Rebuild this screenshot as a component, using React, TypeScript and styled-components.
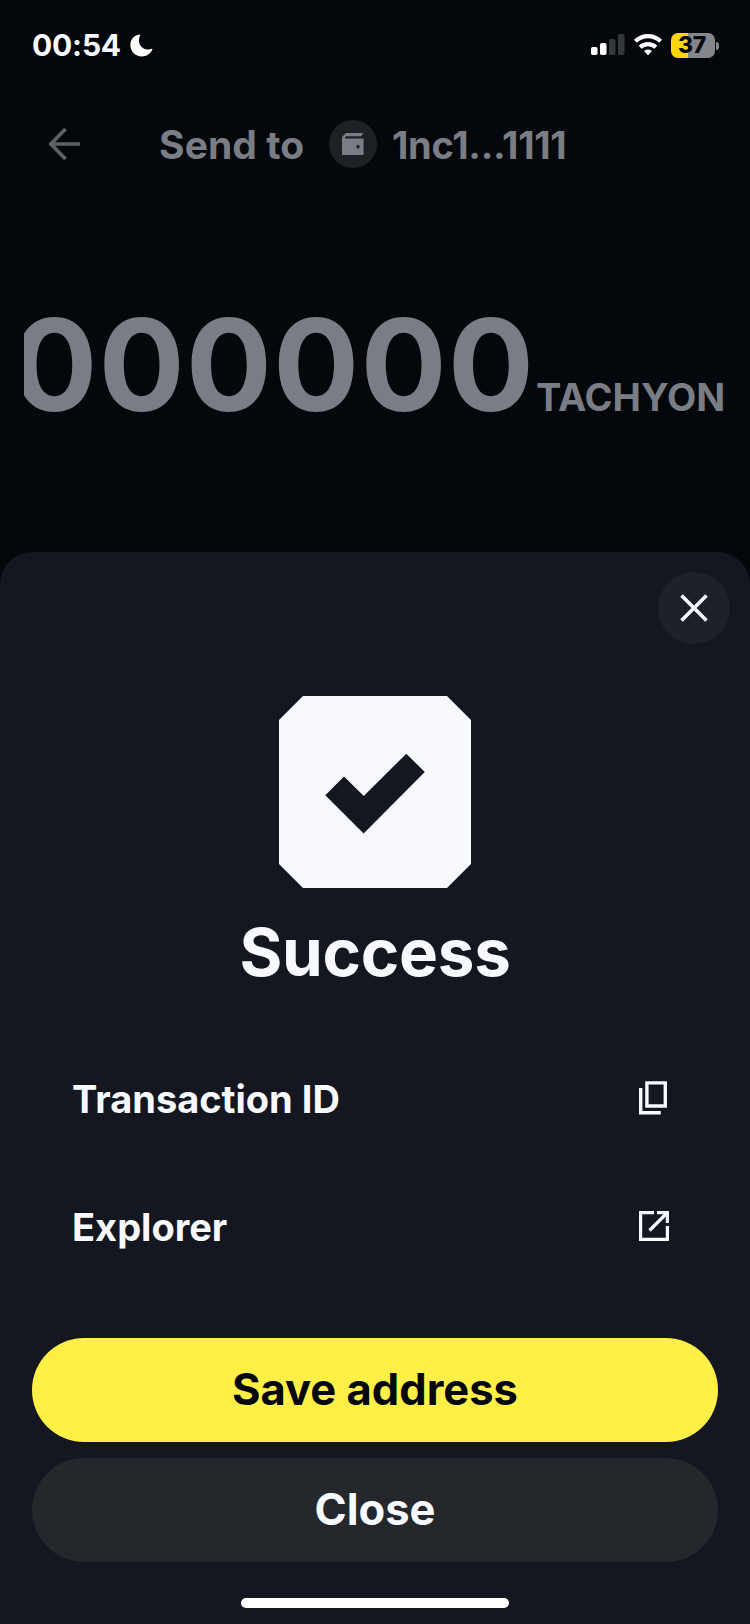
import React from "react";
import styled, { createGlobalStyle } from "styled-components";

const GlobalStyle = createGlobalStyle`
  *, *::before, *::after { box-sizing: border-box; }
  body {
    margin: 0;
    background: #04070c;
    font-family: Inter, "Liberation Sans", sans-serif;
    font-weight: 600;
    color: #f7f9ff;
  }
  svg { display: block; flex: none; }
`;

const Screen = styled.div`
  width: 750px;
  height: 1624px;
  display: flex;
  flex-direction: column;
  overflow: hidden;
  background: linear-gradient(#04070c 540px, #020305 700px);
`;

const StatusBar = styled.header`
  height: 90px;
  padding: 0 31px 0 32px;
  display: flex;
  align-items: center;
  justify-content: space-between;
`;

const Cluster = styled.div<{ $gap: number }>`
  display: flex;
  align-items: center;
  gap: ${(p) => p.$gap}px;
`;

const Label = styled.span<{ $size: number; $spacing?: number; $weight?: number }>`
  font-size: ${(p) => p.$size}px;
  font-weight: ${(p) => p.$weight ?? 660};
  letter-spacing: ${(p) => p.$spacing ?? 0}px;
  line-height: 1.2;
  white-space: nowrap;
`;

const Battery = styled.div`
  position: relative;
  width: 44px;
  height: 25px;
  margin-right: 4px;
  padding: 2px 2px 0 0;
  border-radius: 7px;
  background: linear-gradient(90deg, #ffd60a 17px, #85868a 17px);
  color: #04070c;
  display: flex;
  align-items: center;
  justify-content: center;
  &::after {
    content: "";
    position: absolute;
    left: 45px;
    top: 9px;
    width: 3px;
    height: 8px;
    border-radius: 0 3px 3px 0;
    background: #85868a;
  }
`;

const NavBar = styled.nav`
  height: 108px;
  padding: 0 0 0 48px;
  display: flex;
  align-items: center;
  color: #7b7d84;
`;

const Title = styled.div`
  margin-left: 78px;
  display: flex;
  align-items: center;
`;

const Recipient = styled.div`
  display: flex;
  align-items: center;
  gap: 15px;
`;

const TitleText = styled.div`
  width: 170px;
  padding-top: 2px;
`;

const Address = styled.div`
  padding-top: 3px;
`;

const Avatar = styled.div`
  width: 48px;
  height: 48px;
  border-radius: 50%;
  background: #1d2024;
  display: flex;
  align-items: center;
  justify-content: center;
`;

const Amount = styled.section`
  height: 354px;
  margin: 0 24px;
  padding: 90px 1px 0 0;
  display: flex;
  align-items: baseline;
  justify-content: flex-end;
  gap: 1px;
  overflow: hidden;
  color: #7b7d84;
`;

const Sheet = styled.main`
  flex: 1;
  border-radius: 32px 32px 0 0;
  background: #14171f;
  display: flex;
  flex-direction: column;
  align-items: center;
`;

const CloseButton = styled.button`
  align-self: flex-end;
  width: 72px;
  height: 72px;
  margin: 20px 20px 52px 0;
  padding: 0;
  border: 0;
  border-radius: 50%;
  background: #1e2128;
  color: inherit;
  display: flex;
  align-items: center;
  justify-content: center;
`;

const Heading = styled.h1`
  margin: 25px 0 0;
  font-size: 65.500px;
  font-weight: 680;
  letter-spacing: -0.3px;
  line-height: 80px;
`;

const Rows = styled.div`
  width: 100%;
  margin-top: 42px;
  padding: 0 72px;
`;

const Row = styled.div`
  height: 128px;
  display: flex;
  align-items: center;
  justify-content: space-between;
`;

const RowText = styled.div`
  padding-top: 2px;
`;

const Actions = styled.div`
  width: 100%;
  margin-top: 47px;
  padding: 0 32px;
  display: flex;
  flex-direction: column;
  gap: 16px;
`;

const Button = styled.button<{ $primary?: boolean }>`
  height: 104px;
  padding: 0 0 2px;
  border: 0;
  border-radius: 52px;
  font-family: inherit;
  background: ${(p) => (p.$primary ? "#ffef46" : "#24272b")};
  color: ${(p) => (p.$primary ? "#04070c" : "#f7f9ff")};
`;

const HomeIndicator = styled.div`
  width: 268px;
  height: 10px;
  margin-top: 36px;
  border-radius: 5px;
  background: #fff;
`;

export default function App() {
  return (
    <>
      <GlobalStyle />
      <Screen>
        <StatusBar>
          <Cluster $gap={9}>
            <Label $size={30} $weight={750} $spacing={-0.2}>00:54</Label>
            <svg width="23" height="23" viewBox="0 0 23 23" fill="#fff">
              <path d="M9.2.6C3.9 1.4.4 5.8.4 11c0 6.500 5 11.500 11.400 11.500 4.600 0 8.900-2.800 10.600-7 .2-.6-.2-.9-.8-.7-1.300.5-2.600.7-4 .6C12.500 15.100 9 11.500 8.900 6.700c0-1.900.4-3.600 1.200-5.100.3-.6-.1-1.100-.9-1z" />
            </svg>
          </Cluster>
          <Cluster $gap={9}>
            <svg width="34" height="22" viewBox="0 0 34 22" fill="#fff">
              <rect x="0" y="13" width="6.500" height="8" rx="1.800" />
              <rect x="9" y="9" width="6.500" height="12" rx="1.800" />
              <rect x="18" y="5" width="6.500" height="16" rx="1.800" fill="#35373b" />
              <rect x="27" y="0" width="6.500" height="21" rx="1.800" fill="#35373b" />
            </svg>
            <svg width="28" height="22" viewBox="0 0 28 22" fill="none" stroke="#fff" strokeWidth="4.200">
              <path d="M1.400 7.300a18 18 0 0 1 25.200 0" />
              <path d="M6.200 13.200a11.300 11.300 0 0 1 15.600 0" />
              <path d="M14 21.300l-4-4.200a5.800 5.800 0 0 1 8 0z" fill="#fff" stroke="none" />
            </svg>
            <Battery>
              <Label $size={23} $weight={800} $spacing={-0.3}>37</Label>
            </Battery>
          </Cluster>
        </StatusBar>
        <NavBar>
          <svg width="33" height="34" viewBox="0 0 33 34" fill="none" stroke="#5f6166" strokeWidth="3.600">
            <path d="M32 17H3M17.500 2L2.800 17l14.700 15" />
          </svg>
          <Title>
            <TitleText>
              <Label $size={39} $spacing={0.1}>Send to</Label>
            </TitleText>
            <Recipient>
              <Avatar>
                <svg width="22" height="22" viewBox="0 0 22 22">
                  <path fill="#7b7d84" fillRule="evenodd" d="M4 0h17.500l-2.500 3.300H4.200L3 4.500V5.600h18.600V22H0V4zM16 11.500l-2 2.300 2 2.300 2.200-2.300z" />
                </svg>
              </Avatar>
              <Address>
                <Label $size={38} $spacing={-0.3}>1nc1...1111</Label>
              </Address>
            </Recipient>
          </Title>
        </NavBar>
        <Amount>
          <Label $size={128} $weight={680} $spacing={1}>000000</Label>
          <Label $size={38} $spacing={-0.1}>TACHYON</Label>
        </Amount>
        <Sheet>
          <CloseButton aria-label="Close">
            <svg width="28" height="28" viewBox="0 0 28 28" fill="none" stroke="currentColor" strokeWidth="3.600">
              <path d="M1.500 1.500l25 25M26.500 1.500l-25 25" />
            </svg>
          </CloseButton>
          <svg width="192" height="192" viewBox="0 0 192 192">
            <path fill="#f7f9ff" d="M24 0h144l24 24v144l-24 24H24L0 168V24z" />
            <path fill="#14171f" d="M46.300 99.200L65 80.600 84.800 100l42.500-42.300L145.800 76 84.600 137.500z" />
          </svg>
          <Heading>Success</Heading>
          <Rows>
            <Row>
              <RowText><Label $size={38}>Transaction ID</Label></RowText>
              <svg width="39" height="36" viewBox="0 0 39 36" fill="none" stroke="#f7f9ff" strokeWidth="3.400">
                <path d="M7.900 1.900h18.400v23.100H7.900zM1.700 7v24.700H21.800" />
              </svg>
            </Row>
            <Row>
              <RowText><Label $size={38}>Explorer</Label></RowText>
              <svg width="39" height="32" viewBox="0 0 39 32" fill="none" stroke="#f7f9ff" strokeWidth="3.200">
                <path d="M15 1.600H1.600v26.800h26.800V15M18 1.600h10.400V12M28 2L10.500 19.500" />
              </svg>
            </Row>
          </Rows>
          <Actions>
            <Button $primary><Label $size={43.5}>Save address</Label></Button>
            <Button><Label $size={43.5}>Close</Label></Button>
          </Actions>
          <HomeIndicator />
        </Sheet>
      </Screen>
    </>
  );
}
